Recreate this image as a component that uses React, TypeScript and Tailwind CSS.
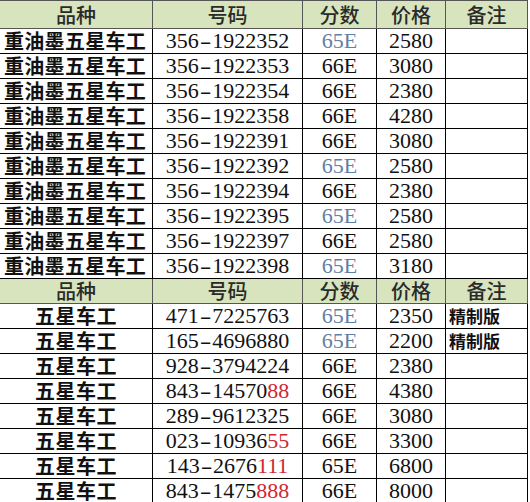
import React from "react";

type Row = { name: string; code: string; red?: string; score: string; blue?: boolean; price: string; note?: string };

const top: Row[] = [
  { name: "重油墨五星车工", code: "356-1922352", score: "65E", blue: true, price: "2580" },
  { name: "重油墨五星车工", code: "356-1922353", score: "66E", price: "3080" },
  { name: "重油墨五星车工", code: "356-1922354", score: "66E", price: "2380" },
  { name: "重油墨五星车工", code: "356-1922358", score: "66E", price: "4280" },
  { name: "重油墨五星车工", code: "356-1922391", score: "66E", price: "3080" },
  { name: "重油墨五星车工", code: "356-1922392", score: "65E", blue: true, price: "2580" },
  { name: "重油墨五星车工", code: "356-1922394", score: "66E", price: "2380" },
  { name: "重油墨五星车工", code: "356-1922395", score: "65E", blue: true, price: "2580" },
  { name: "重油墨五星车工", code: "356-1922397", score: "66E", price: "2580" },
  { name: "重油墨五星车工", code: "356-1922398", score: "65E", blue: true, price: "3180" },
];

const bottom: Row[] = [
  { name: "五星车工", code: "471-7225763", score: "65E", blue: true, price: "2350", note: "精制版" },
  { name: "五星车工", code: "165-4696880", score: "65E", blue: true, price: "2200", note: "精制版" },
  { name: "五星车工", code: "928-3794224", score: "66E", price: "2380" },
  { name: "五星车工", code: "843-14570", red: "88", score: "66E", price: "4380" },
  { name: "五星车工", code: "289-9612325", score: "66E", price: "3080" },
  { name: "五星车工", code: "023-10936", red: "55", score: "66E", price: "3300" },
  { name: "五星车工", code: "143-2676", red: "111", score: "65E", price: "6800" },
  { name: "五星车工", code: "843-1475", red: "888", score: "66E", price: "8000" },
];

const cjk = "font-['Noto_Sans_CJK_SC',sans-serif]";
const serif = "font-['Liberation_Serif','Noto_Sans_CJK_SC',serif]";

function Code({ code, red }: { code: string; red?: string }) {
  const [a, b] = code.split("-");
  return (
    <span className={`${serif} text-[22px] leading-[22px] text-[#111]`}>
      {a}
      <span className="inline-block px-[3px] scale-x-[1.6] leading-[22px]">-</span>
      {b}
      {red && <span className="text-[#d22630]">{red}</span>}
    </span>
  );
}

function Cell({
  children,
  h,
  align = "center",
  className = "",
}: {
  children?: React.ReactNode;
  h: "h-[27px]" | "h-[24px]";
  align?: "center" | "left";
  className?: string;
}) {
  return (
    <div
      className={`${h} flex items-center overflow-visible whitespace-nowrap ${
        align === "center" ? "justify-center" : "justify-start"
      } ${className}`}
    >
      {children}
    </div>
  );
}

function Header({ first }: { first: boolean }) {
  const td = "border border-[#555] p-0";
  const txt = `${cjk} text-[20px] leading-[22px] font-medium text-[#2a2a2a]`;
  const h = first ? "h-[27px]" : "h-[24px]";
  const labels = ["品种", "号码", "分数", "价格", "备注"];
  return (
    <tr className="bg-[#d7e4bd]">
      {labels.map((l) => (
        <td key={l} className={td}>
          <Cell h={h} className={txt}>
            {l}
          </Cell>
        </td>
      ))}
    </tr>
  );
}

function DataRow({ r, full }: { r: Row; full: boolean }) {
  const td = "border border-black p-0";
  return (
    <tr>
      <td className={td}>
        <Cell
          h="h-[24px]"
          align={full ? "left" : "center"}
          className={`${cjk} text-[20px] leading-[22px] font-semibold text-[#111] ${
            full ? "pl-[4px] tracking-[0.3px]" : "tracking-[0.5px]"
          }`}
        >
          {r.name}
        </Cell>
      </td>
      <td className={td}>
        <Cell h="h-[24px]">
          <Code code={r.code} red={r.red} />
        </Cell>
      </td>
      <td className={td}>
        <Cell
          h="h-[24px]"
          className={`${serif} text-[22px] leading-[22px] ${r.blue ? "text-[#5f80a6]" : "text-[#111]"}`}
        >
          {r.score}
        </Cell>
      </td>
      <td className={td}>
        <Cell h="h-[24px]" className={`${serif} text-[22px] leading-[22px] text-[#111]`}>
          {r.price}
        </Cell>
      </td>
      <td className={td}>
        <Cell
          h="h-[24px]"
          align="left"
          className={`${cjk} text-[17px] leading-[20px] font-bold pl-[3px] text-[#111]`}
        >
          {r.note ?? ""}
        </Cell>
      </td>
    </tr>
  );
}

export default function App() {
  return (
    <div className="w-[530px] h-[502px] overflow-hidden bg-white">
      <table className="table-fixed border-collapse w-[528px] -ml-px">
        <colgroup>
          <col className="w-[153px]" />
          <col className="w-[150px]" />
          <col className="w-[74px]" />
          <col className="w-[69px]" />
          <col className="w-[82px]" />
        </colgroup>
        <tbody>
          <Header first />
          {top.map((r, i) => (
            <DataRow key={"t" + i} r={r} full />
          ))}
          <Header first={false} />
          {bottom.map((r, i) => (
            <DataRow key={"b" + i} r={r} full={false} />
          ))}
        </tbody>
      </table>
    </div>
  );
}
